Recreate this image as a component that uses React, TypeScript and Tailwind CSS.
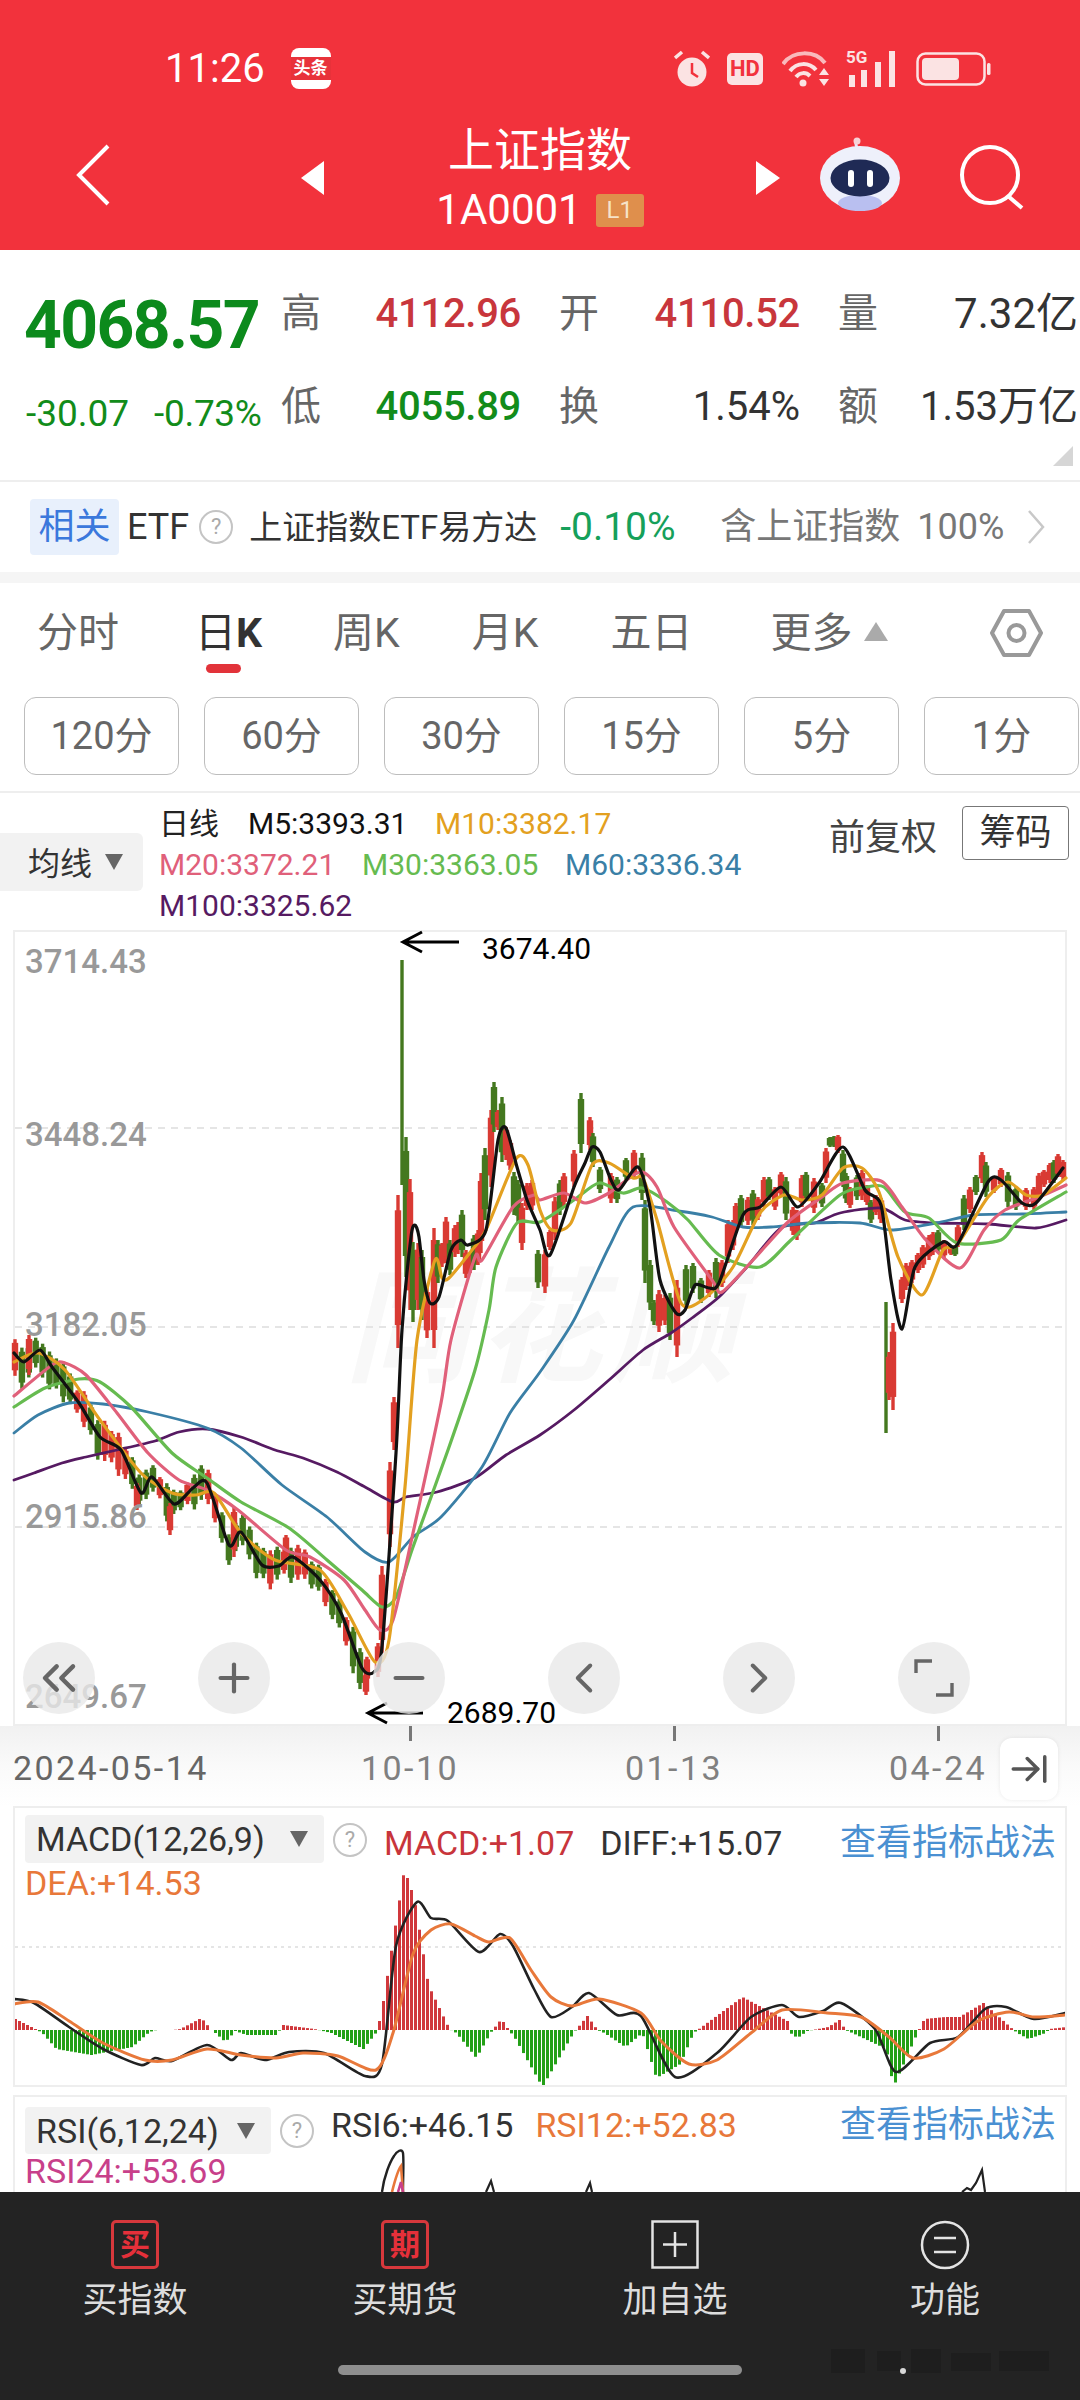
import React from 'react';
import { ArrowRightToLine, ChevronLeft, ChevronRight, ChevronsLeft, Minus, Plus } from 'lucide-react';

type Pt = [number, number];
// x, top, bottom, colour, thin
type Candle = [number, number, number, 'r' | 'g', boolean?];

const parse = (s: string): Pt[] =>
  s
    .trim()
    .split(/\s+/)
    .map((p) => p.split(',').map(Number) as Pt);

const interp = (pts: Pt[], x: number) => {
  for (let i = 1; i < pts.length; i++) {
    if (x <= pts[i][0]) {
      const [x0, y0] = pts[i - 1];
      const [x1, y1] = pts[i];
      return y0 + ((y1 - y0) * (x - x0)) / (x1 - x0 || 1);
    }
  }
  return pts[pts.length - 1][1];
};

// rounds the read-off points into a curve, the chart lines are not angular
const smooth = (s: string) => {
  const pts = parse(s);
  let d = `M${pts[0][0]} ${pts[0][1]}`;
  for (let i = 0; i < pts.length - 1; i++) {
    const p0 = pts[Math.max(i - 1, 0)];
    const p1 = pts[i];
    const p2 = pts[i + 1];
    const p3 = pts[Math.min(i + 2, pts.length - 1)];
    const c1x = p1[0] + (p2[0] - p0[0]) / 8;
    const c1y = p1[1] + (p2[1] - p0[1]) / 8;
    const c2x = p2[0] - (p3[0] - p1[0]) / 8;
    const c2y = p2[1] - (p3[1] - p1[1]) / 8;
    d += `C${c1x} ${c1y} ${c2x} ${c2y} ${p2[0]} ${p2[1]}`;
  }
  return d;
};

// moving averages, page coordinates
const M100 =
  '14,1480 34,1473 62,1463 86,1457 117,1450 155,1441 179,1432 207,1429 241,1437 275,1450 303,1458 337,1472 365,1487 393,1502 406,1497 437,1492 475,1478 506,1455 540,1435 574,1410 609,1380 643,1350 671,1333 692,1318 719,1297 747,1267 781,1228 815,1223 840,1213 881,1208 905,1220 936,1223 988,1224 1036,1228 1066,1220';
const M60 =
  '14,1433 38,1415 69,1403 103,1404 148,1412 207,1428 241,1448 282,1485 327,1517 365,1552 389,1562 413,1537 441,1517 482,1467 510,1413 540,1372 574,1320 609,1247 633,1207 678,1211 712,1217 743,1227 771,1227 809,1223 860,1223 891,1230 936,1223 974,1215 1022,1214 1066,1212';
const M30 =
  '14,1407 45,1388 79,1379 100,1382 131,1407 172,1453 207,1478 241,1502 289,1528 327,1560 362,1590 382,1607 396,1597 413,1547 448,1450 475,1370 489,1310 496,1267 517,1223 540,1222 574,1200 599,1183 623,1193 642,1188 667,1202 688,1220 719,1255 760,1267 791,1240 840,1195 867,1187 884,1187 905,1212 929,1218 957,1243 1001,1240 1019,1220 1066,1192';
const M20 =
  '14,1396 52,1365 65,1363 86,1375 117,1413 148,1453 179,1480 207,1490 238,1510 286,1550 310,1557 344,1580 365,1610 380,1630 393,1620 413,1533 441,1403 451,1340 475,1257 482,1260 513,1207 534,1195 540,1200 564,1193 585,1203 609,1193 640,1172 657,1187 674,1227 712,1280 722,1292 753,1260 788,1222 822,1197 843,1183 881,1181 902,1207 926,1240 960,1268 984,1230 1005,1210 1039,1197 1066,1185';
const M10 =
  '14,1362 38,1353 65,1370 100,1420 141,1473 172,1493 196,1495 214,1493 241,1533 275,1560 320,1570 348,1613 375,1662 389,1640 405,1487 417,1340 435,1260 442,1278 449,1278 472,1250 486,1230 516,1159 528,1165 540,1210 552,1230 571,1223 592,1165 609,1163 633,1178 643,1178 657,1220 681,1303 705,1298 733,1267 760,1213 784,1195 802,1200 822,1195 843,1168 862,1168 879,1192 898,1257 922,1295 943,1250 957,1245 988,1197 1008,1182 1026,1195 1043,1195 1066,1178';
const M5 =
  '14,1353 24,1362 40,1350 52,1367 79,1403 100,1437 121,1450 141,1493 152,1477 174,1504 193,1488 207,1483 229,1545 241,1532 262,1565 279,1566 293,1557 320,1580 341,1613 362,1668 374,1672 382,1647 396,1453 402,1330 411,1237 415,1225 419,1237 424,1280 430,1303 439,1297 451,1250 461,1240 468,1245 486,1230 498,1140 506,1128 517,1167 527,1200 540,1230 550,1255 574,1187 585,1163 592,1147 600,1152 611,1180 619,1190 638,1167 650,1207 660,1280 676,1313 685,1310 695,1285 709,1288 719,1283 743,1215 760,1207 781,1187 798,1207 819,1183 843,1147 865,1190 881,1205 891,1280 902,1329 915,1267 943,1242 957,1245 988,1182 1001,1180 1022,1203 1036,1203 1063,1168';

const DIFF =
  '14,1999 34,2003 69,2027 103,2049 141,2065 155,2058 172,2061 207,2045 231,2060 241,2053 265,2060 289,2052 324,2053 365,2076 382,2064 396,1946 417,1902 431,1918 448,1921 479,1952 500,1934 513,1946 534,1989 551,2017 572,2007 589,1993 617,2015 641,2016 675,2077 717,2053 751,2017 782,2005 799,2017 823,2011 841,2003 875,2029 896,2072 930,2043 958,2037 985,2009 1006,2007 1034,2019 1065,2013';
const DEA =
  '14,2004 38,2002 69,2021 103,2043 145,2060 172,2060 207,2049 241,2055 276,2058 303,2053 338,2056 376,2070 393,2033 413,1954 431,1930 451,1924 475,1936 489,1942 510,1938 531,1970 551,1997 572,2006 599,1999 641,2013 661,2041 689,2064 717,2060 751,2033 782,2010 827,2013 861,2017 889,2037 913,2058 944,2049 978,2021 1009,2012 1034,2017 1065,2015';
// histogram outline as read from the picture: x, y of the bar tip
const HIST = parse(
  '14,2019 34,2029 41,2033 55,2049 90,2055 131,2047 148,2032 155,2030 172,2030 179,2029 200,2018 210,2030 214,2033 224,2042 234,2031 245,2035 275,2035 282,2025 313,2029 330,2033 362,2049 376,2031 382,2001 403,1869 413,1899 427,1985 448,2029 455,2033 475,2058 489,2033 500,2019 508,2031 513,2037 541,2087 572,2033 586,2016 596,2030 603,2033 624,2047 641,2033 655,2078 679,2064 692,2033 699,2028 741,1997 786,2021 789,2033 796,2038 806,2031 827,2027 838,2020 844,2030 851,2033 885,2049 892,2087 916,2033 923,2019 944,2017 958,2017 982,2003 1011,2029 1016,2033 1027,2039 1044,2033 1048,2029 1065,2027',
);

const rand = (i: number) => {
  const v = Math.sin(i * 12.9898) * 43758.5453;
  return v - Math.floor(v);
};

const handCandles: Candle[] = [
  [29, 1335, 1375, 'r'], [137, 1483, 1510, 'r'], [170, 1503, 1535, 'r'], [234, 1507, 1557, 'r'], [286, 1535, 1560, 'r'],
  [366, 1673, 1695, 'r'], [378, 1643, 1677, 'r'], [382, 1566, 1653, 'r'], [390, 1462, 1547, 'r'], [394, 1397, 1450, 'r'],
  [398, 1195, 1348, 'r'], [402, 960, 1185, 'g', true], [406, 1137, 1277, 'g'], [410, 1179, 1310, 'r'], [413, 1242, 1322, 'g'],
  [418, 1243, 1310, 'r'], [422, 1250, 1320, 'g'], [427, 1287, 1338, 'r'], [434, 1228, 1348, 'r'], [438, 1240, 1283, 'g'],
  [442, 1243, 1267, 'r'], [446, 1217, 1263, 'r'], [450, 1240, 1275, 'g'], [455, 1225, 1257, 'r'], [458, 1222, 1254, 'r'],
  [462, 1210, 1257, 'g'], [466, 1250, 1278, 'r'], [470, 1253, 1273, 'r'], [474, 1235, 1270, 'g'], [478, 1230, 1265, 'r'],
  [481, 1173, 1253, 'r'], [485, 1148, 1220, 'g'], [491, 1110, 1187, 'r'], [494, 1082, 1132, 'g'], [498, 1110, 1130, 'r'],
  [502, 1097, 1162, 'g'], [506, 1127, 1160, 'r'], [510, 1140, 1170, 'r'], [514, 1172, 1215, 'g'], [518, 1180, 1222, 'g'],
  [522, 1203, 1250, 'r'], [527, 1183, 1210, 'r'], [532, 1180, 1210, 'r'], [538, 1250, 1288, 'g'], [545, 1250, 1293, 'r'],
  [550, 1230, 1250, 'r'], [555, 1197, 1240, 'r'], [560, 1180, 1215, 'g'], [564, 1173, 1207, 'r'], [574, 1150, 1187, 'r'],
  [581, 1093, 1153, 'g'], [590, 1117, 1150, 'r'], [593, 1133, 1167, 'g'], [600, 1167, 1193, 'g'], [611, 1173, 1203, 'r'],
  [617, 1177, 1203, 'g'], [626, 1158, 1180, 'g'], [634, 1150, 1177, 'r'], [642, 1153, 1200, 'g'], [645, 1200, 1283, 'g'],
  [650, 1260, 1310, 'g'], [654, 1300, 1325, 'g'], [659, 1290, 1332, 'r'], [665, 1295, 1325, 'r'], [670, 1293, 1340, 'g'],
  [677, 1280, 1357, 'r'], [686, 1265, 1307, 'g'], [693, 1263, 1293, 'g'], [701, 1278, 1303, 'g'], [709, 1270, 1297, 'r'],
  [716, 1258, 1298, 'g'], [722, 1260, 1287, 'r'], [728, 1220, 1263, 'r'], [733, 1220, 1250, 'r'], [736, 1203, 1233, 'r'],
  [741, 1195, 1227, 'g'], [748, 1197, 1225, 'r'], [753, 1190, 1225, 'g'], [758, 1197, 1220, 'r'], [764, 1177, 1207, 'r'],
  [769, 1177, 1200, 'g'], [775, 1187, 1210, 'r'], [781, 1172, 1197, 'r'], [786, 1177, 1220, 'g'], [793, 1207, 1235, 'r'],
  [797, 1210, 1240, 'r'], [802, 1175, 1207, 'r'], [806, 1172, 1200, 'g'], [814, 1178, 1213, 'r'], [822, 1183, 1207, 'g'],
  [826, 1148, 1183, 'r'], [830, 1137, 1147, 'g'], [834, 1136, 1147, 'g'], [838, 1135, 1153, 'r'], [843, 1150, 1187, 'g'],
  [846, 1173, 1203, 'g'], [850, 1187, 1208, 'r'], [857, 1175, 1200, 'g'], [862, 1170, 1200, 'r'], [867, 1185, 1205, 'r'],
  [871, 1200, 1223, 'g'], [876, 1195, 1215, 'r'], [881, 1198, 1223, 'r'], [886, 1302, 1433, 'g', true], [893, 1323, 1410, 'r'],
  [889, 1352, 1400, 'r'], [902, 1277, 1303, 'r'], [906, 1263, 1290, 'r'], [912, 1260, 1283, 'r'], [918, 1253, 1273, 'r'],
  [923, 1245, 1268, 'r'], [929, 1235, 1260, 'r'], [933, 1232, 1255, 'r'], [938, 1230, 1253, 'g'], [944, 1240, 1258, 'r'],
  [951, 1245, 1255, 'r'], [955, 1245, 1256, 'g'], [958, 1225, 1247, 'r'], [964, 1195, 1230, 'g'], [970, 1187, 1213, 'r'],
  [976, 1175, 1195, 'g'], [982, 1152, 1183, 'r'], [986, 1162, 1197, 'g'], [994, 1177, 1193, 'r'], [1001, 1168, 1187, 'r'],
  [1008, 1172, 1207, 'g'], [1016, 1187, 1210, 'g'], [1026, 1188, 1210, 'r'], [1034, 1187, 1210, 'r'], [1039, 1173, 1200, 'r'],
  [1044, 1170, 1187, 'r'], [1050, 1163, 1183, 'r'], [1054, 1160, 1183, 'g'], [1058, 1154, 1177, 'r'], [1063, 1160, 1180, 'r'],
];

const m5Pts = parse(M5);
const generated: Candle[] = Array.from({ length: 52 }, (_, i) => {
  const x = 15 + i * 6.9;
  const y = interp(m5Pts, x);
  const h = rand(i + 3);
  return [x, y - 8 - h * 12, y + 10 + rand(i + 40) * 20, rand(i + 80) > 0.68 ? 'r' : 'g'] as Candle;
});
const candles = [...generated, ...handCandles];

const CandleMark = ({ c }: { c: Candle }) => {
  const [x, top, bottom, colour, thin] = c;
  const fill = colour === 'r' ? '#d93a33' : '#44781f';
  const h = bottom - top;
  return (
    <g fill={fill}>
      <rect x={x - 1.7} y={top} width={3.4} height={h} />
      {!thin && <rect x={x - 3.2} y={top + h * 0.1} width={6.4} height={h * 0.75} />}
    </g>
  );
};

const Line = ({ d, color, w = 3.2 }: { d: string; color: string; w?: number }) => (
  <path d={smooth(d)} fill="none" stroke={color} strokeWidth={w} strokeLinejoin="round" strokeLinecap="round" />
);

const Question = () => (
  <span className="flex h-[34px] w-[34px] shrink-0 items-center justify-center rounded-full border-2 border-[#c4c4c4] text-[22px] leading-none text-[#aaaaaa]">
    ?
  </span>
);

const DownTriangle = ({ className }: { className: string }) => (
  <svg viewBox="0 0 20 18" className={className}>
    <path d="M1 1h18l-9 16z" fill="#666666" />
  </svg>
);

const StatusBar = () => (
  <div className="mt-[48px] flex h-[41px] items-center justify-between pl-[165px] pr-[89px]">
    <div className="flex items-center gap-[26px]">
      <span className="text-[40px] leading-none text-white">11:26</span>
      <div className="flex h-[41px] w-[40px] items-center justify-center rounded-[8px] bg-white">
        <span className="flex h-[23px] w-full items-center justify-center bg-[#e8323a] text-[17px] font-bold leading-none text-white">
          头条
        </span>
      </div>
    </div>
    <div className="flex items-center text-[#fbe3e3]">
      <svg viewBox="0 0 36 38" className="h-[38px] w-[36px]">
        <circle cx="18" cy="22" r="14.5" fill="#fbe3e3" />
        <path d="M18 13v10l6 4" fill="none" stroke="#f2323c" strokeWidth="2.5" />
        <path d="M1 8l7-6M35 8l-7-6" stroke="#fbe3e3" strokeWidth="3.5" />
      </svg>
      <span className="ml-[17px] flex h-[32px] w-[36px] items-center justify-center rounded-[5px] bg-[#fbe3e3] text-[22px] font-bold leading-none text-[#f2323c]">
        HD
      </span>
      <svg viewBox="0 0 48 36" className="ml-[19px] h-[36px] w-[48px]">
        <path d="M1 13C11 -1 33 -1 43 12" fill="none" stroke="#f9b9bc" strokeWidth="4" />
        <path d="M8 20c7-9 19-9 26-1" fill="none" stroke="#fbe3e3" strokeWidth="4" />
        <path d="M14 26c4-5 10-5 14-1" fill="none" stroke="#fbe3e3" strokeWidth="4" />
        <circle cx="21" cy="32" r="3.5" fill="#fbe3e3" />
        <path d="M42 17l5 7h-10zM42 35l5-7h-10z" fill="#fbe3e3" />
      </svg>
      <div className="relative ml-[16px] h-[36px] w-[53px]">
        <span className="absolute left-0 top-[-2px] text-[17px] font-bold leading-none">5G</span>
        <svg viewBox="0 0 53 36" className="h-[36px] w-[53px]">
          <rect x="3" y="24" width="6" height="12" fill="#fbe3e3" />
          <rect x="15" y="19" width="6" height="17" fill="#fbe3e3" />
          <rect x="29" y="11" width="6" height="25" fill="#fbe3e3" />
          <rect x="43" y="0" width="6" height="36" fill="#fbe3e3" />
        </svg>
      </div>
      <svg viewBox="0 0 75 34" className="ml-[17px] h-[34px] w-[75px]">
        <rect x="1.5" y="1.5" width="67" height="31" rx="8" fill="none" stroke="#fbe3e3" strokeWidth="2.5" />
        <rect x="6" y="6" width="37" height="22" rx="4" fill="#fbe3e3" />
        <rect x="71" y="11" width="3.5" height="12" rx="1.5" fill="#fbe3e3" />
      </svg>
    </div>
  </div>
);

const NavBar = () => (
  <div className="mt-[39px] flex h-[110px] items-start pl-[76px] text-white">
    <svg viewBox="0 0 34 62" className="mt-[16px] h-[62px] w-[34px] shrink-0">
      <path d="M32 2L3 31l29 29" fill="none" stroke="#ffffff" strokeWidth="4" />
    </svg>
    <svg viewBox="0 0 23 34" className="ml-[191px] mt-[33px] h-[34px] w-[23px] shrink-0">
      <path d="M23 0v34L0 17z" fill="#ffffff" />
    </svg>
    <div className="flex w-[432px] shrink-0 flex-col items-center">
      <span className="text-[46px] leading-[44px]">上证指数</span>
      <div className="mt-[20px] flex items-center gap-[14px]">
        <span className="text-[42px] leading-[36px]">1A0001</span>
        <span className="flex h-[33px] w-[48px] items-center justify-center rounded-[3px] bg-[#df8f4c] text-[24px] leading-none text-[#f6e3c9]">
          L1
        </span>
      </div>
    </div>
    <svg viewBox="0 0 24 34" className="mt-[33px] h-[34px] w-[24px] shrink-0">
      <path d="M0 0v34l24-17z" fill="#ffffff" />
    </svg>
    <svg viewBox="0 0 80 74" className="ml-[40px] mt-[9px] h-[74px] w-[80px] shrink-0">
      <path d="M38 12c-3-4-3-8 1-9" fill="none" stroke="#e8e9fb" strokeWidth="3" />
      <circle cx="37" cy="4" r="3.5" fill="#f7d2d6" />
      <ellipse cx="40" cy="41" rx="40" ry="32" fill="#eef0fb" />
      <ellipse cx="40" cy="66" rx="22" ry="8" fill="#b9bff0" />
      <ellipse cx="40" cy="41" rx="29.5" ry="18.5" fill="#1f2a55" />
      <rect x="28" y="33" width="6" height="17" rx="3" fill="#ffffff" />
      <rect x="47" y="33" width="6" height="17" rx="3" fill="#ffffff" />
    </svg>
    <svg viewBox="0 0 67 66" className="ml-[58px] mt-[16px] h-[66px] w-[67px] shrink-0">
      <circle cx="32" cy="31" r="28" fill="none" stroke="#ffffff" strokeWidth="4" />
      <path d="M50 52l14 12" fill="none" stroke="#ffffff" strokeWidth="4" />
    </svg>
  </div>
);

const Quote = () => (
  <div className="relative flex h-[232px] border-b-2 border-[#eeeeee]">
    <div className="w-[281px] shrink-0 pl-[24px]">
      <div className="mt-[34px] h-[84px] text-[66px] font-bold leading-[84px] tracking-[-1.6px] text-[#0c8a1c]">4068.57</div>
      <div className="mt-[28px] flex text-[37px] leading-[36px] text-[#128c1a]">
        <span className="w-[130px] pl-[2px]">-30.07</span>
        <span className="tracking-[-0.3px]">-0.73%</span>
      </div>
    </div>
    <div className="mt-[40px] grid h-[186px] grid-cols-[41px_161px_41px_162px_42px_160px] grid-rows-[48px_48px] gap-x-[38px] gap-y-[45px] text-[40px] leading-[48px]">
      <span className="text-[#666666]">高</span>
      <span className="text-right font-medium tracking-[-0.3px] text-[#c8363c]">4112.96</span>
      <span className="text-[#666666]">开</span>
      <span className="text-right font-medium tracking-[-0.3px] text-[#c8363c]">4110.52</span>
      <span className="text-[#666666]">量</span>
      <span className="whitespace-nowrap text-right text-[42px] text-[#333333]">7.32亿</span>
      <span className="text-[#666666]">低</span>
      <span className="text-right font-medium tracking-[-0.3px] text-[#128c1a]">4055.89</span>
      <span className="text-[#666666]">换</span>
      <span className="text-right text-[#333333]">1.54%</span>
      <span className="text-[#666666]">额</span>
      <span className="whitespace-nowrap text-right text-[40px] text-[#333333]">1.53万亿</span>
    </div>
    <svg viewBox="0 0 20 20" className="absolute left-[1053px] top-[196px] h-[20px] w-[20px]">
      <path d="M20 0v20H0z" fill="#d6d6d6" />
    </svg>
  </div>
);

const EtfRow = () => (
  <div className="flex h-[90px] items-center whitespace-nowrap pl-[30px] text-[36px] leading-none">
    <span className="flex h-[56px] w-[89px] shrink-0 items-center justify-center rounded-[4px] bg-[#e8f0fc] text-[#3b78dc]">相关</span>
    <span className="ml-[8px] text-[#333333]">ETF</span>
    <span className="ml-[10px]">
      <Question />
    </span>
    <span className="ml-[16px] w-[292px] shrink-0 text-[33px] text-[#333333]">上证指数ETF易方达</span>
    <span className="ml-[19px] w-[123px] shrink-0 text-[39px] text-[#16a05a]">-0.10%</span>
    <span className="ml-[37px] w-[180px] shrink-0 text-[#777777]">含上证指数</span>
    <span className="ml-[17px] w-[90px] shrink-0 text-[36px] text-[#777777]">100%</span>
    <svg viewBox="0 0 18 34" className="ml-[20px] h-[34px] w-[18px] shrink-0">
      <path d="M2 1l14 16L2 33" fill="none" stroke="#c8c8c8" strokeWidth="2.5" />
    </svg>
  </div>
);

const Tabs = () => (
  <div className="flex h-[114px] items-center pb-[14px] pl-[37px] text-[41px] leading-none text-[#666666]">
    <span>分时</span>
    <span className="relative ml-[76px] text-[#333333]">
      日<b className="font-bold">K</b>
      <span className="absolute left-[11px] top-[51px] h-[9px] w-[35px] rounded-full bg-[#e2333a]" />
    </span>
    <span className="ml-[71px]">周K</span>
    <span className="ml-[72px]">月K</span>
    <span className="ml-[72px]">五日</span>
    <span className="ml-[78px]">更多</span>
    <svg viewBox="0 0 24 19" className="mb-[4px] ml-[11px] h-[19px] w-[24px]">
      <path d="M12 0l12 19H0z" fill="#aaaaaa" />
    </svg>
    <svg viewBox="0 0 53 50" className="ml-[102px] h-[50px] w-[53px]">
      <path d="M14 3h25l12 22-12 22H14L2 25z" fill="none" stroke="#999999" strokeWidth="4" strokeLinejoin="round" />
      <circle cx="26.5" cy="25" r="8" fill="none" stroke="#999999" strokeWidth="4" />
    </svg>
  </div>
);

const Periods = () => (
  <div className="flex h-[96px] gap-[25px] border-b-2 border-[#eeeeee] pl-[24px]">
    {['120分', '60分', '30分', '15分', '5分', '1分'].map((p) => (
      <span
        key={p}
        className="flex h-[78px] w-[155px] shrink-0 items-center justify-center rounded-[12px] border border-[#bdbdbd] text-[38px] leading-none text-[#666666]"
      >
        {p}
      </span>
    ))}
  </div>
);

const Legend = () => (
  <div className="flex h-[137px] text-[30px] leading-[41px]">
    <div className="mt-[40px] flex h-[58px] w-[143px] shrink-0 items-center rounded-r-[6px] bg-[#f2f2f2] pl-[28px]">
      <span className="pt-[4px] text-[32px] leading-none text-[#333333]">均线</span>
      <DownTriangle className="ml-[12px] h-[18px] w-[20px]" />
    </div>
    <div className="ml-[16px] mt-[10px] w-[600px]">
      <div className="flex">
        <span className="w-[89px] text-[#222222]">日线</span>
        <span className="w-[187px] text-[#111111]">M5:3393.31</span>
        <span className="text-[#e3a020]">M10:3382.17</span>
      </div>
      <div className="flex">
        <span className="w-[203px] text-[#e0607a]">M20:3372.21</span>
        <span className="w-[203px] text-[#66bb50]">M30:3363.05</span>
        <span className="text-[#3a7fa6]">M60:3336.34</span>
      </div>
      <div className="text-[#561a62]">M100:3325.62</div>
    </div>
    <span className="ml-[70px] mt-[23px] text-[36px] leading-[44px] text-[#444444]">前复权</span>
    <span className="ml-[25px] mt-[13px] flex h-[54px] w-[107px] items-center justify-center rounded-[4px] border border-[#777777] text-[36px] leading-none text-[#333333]">
      筹码
    </span>
  </div>
);

const KChart = () => (
  <div className="relative ml-[13px] h-[796px] w-[1054px] border-2 border-[#eeeeee]">
    <svg viewBox="15 932 1050 792" className="absolute inset-0 h-[792px] w-[1050px] overflow-visible">
      <text x="345" y="1372" fontSize="124" fontWeight="700" fontStyle="italic" fill="#f8f8f8" textLength="390">
        同花顺
      </text>
      {[1128, 1327, 1527].map((y) => (
        <line key={y} x1="15" x2="1065" y1={y} y2={y} stroke="#dddddd" strokeWidth="1.5" strokeDasharray="7 6" />
      ))}
      {candles.map((c, i) => (
        <CandleMark key={i} c={c} />
      ))}
      <Line d={M100} color="#561a62" w={2.8} />
      <Line d={M60} color="#3a7fa6" w={2.8} />
      <Line d={M30} color="#66bb50" />
      <Line d={M20} color="#e0607a" />
      <Line d={M10} color="#e3a020" />
      <Line d={M5} color="#111111" />
      <path d="M459 942H403m19-10l-19 10 19 10" fill="none" stroke="#000000" strokeWidth="3" />
      <path d="M423 1713H368m19-10l-19 10 19 10" fill="none" stroke="#000000" strokeWidth="3" />
    </svg>
    {[
      ['3714.43', 'top-[10px]'],
      ['3448.24', 'top-[183px]'],
      ['3182.05', 'top-[373px]'],
      ['2915.86', 'top-[565px]'],
      ['2649.67', 'top-[745px]'],
    ].map(([t, top]) => (
      <span key={t} className={`absolute left-[10px] ${top} text-[33px] font-medium leading-[40px] text-[#999999]`}>
        {t}
      </span>
    ))}
    <span className="absolute left-[467px] top-[-3px] text-[30px] leading-[40px] text-black">3674.40</span>
    <span className="absolute left-[432px] top-[761px] text-[30px] leading-[40px] text-black">2689.70</span>
    <div className="absolute left-[8px] top-[710px] flex gap-[103px]">
      {[
        <ChevronsLeft key="a" size={56} strokeWidth={1.9} />,
        <Plus key="b" size={46} strokeWidth={2.2} />,
        <Minus key="c" size={46} strokeWidth={2.2} />,
        <ChevronLeft key="d" size={50} strokeWidth={1.9} />,
        <ChevronRight key="e" size={50} strokeWidth={1.9} />,
        <svg key="f" viewBox="0 0 40 38" className="h-[38px] w-[40px]" fill="none" stroke="#666666" strokeWidth="3.4">
          <path d="M2 14V2h16M38 24v12H22" />
        </svg>,
      ].map((icon, i) => (
        <div key={i} className="flex h-[72px] w-[72px] items-center justify-center rounded-full bg-[#e8e8e8]/80 text-[#666666]">
          {icon}
        </div>
      ))}
    </div>
  </div>
);

const DateAxis = () => (
  <div className="relative flex h-[80px] bg-gradient-to-b from-[#f1f1f1] via-[#fafafa] to-white pl-[13px] text-[34px] leading-[40px] tracking-[2.4px] text-[#666666]">
    <span className="mt-[22px] w-[337px]">2024-05-14</span>
    {['10-10', '01-13', '04-24'].map((d, i) => (
      <div key={d} className={`flex w-[120px] flex-col items-center text-[#808080] ${i === 0 ? '' : 'ml-[144px]'}`}>
        <span className="h-[15px] w-[3px] bg-[#777777]" />
        <span className="mt-[7px]">{d}</span>
      </div>
    ))}
    <div className="absolute left-[1000px] top-[12px] flex h-[62px] w-[58px] items-center justify-center rounded-[12px] bg-white shadow-[0_0_4px_rgba(0,0,0,0.08)]">
      <ArrowRightToLine size={42} strokeWidth={2} color="#555555" />
    </div>
  </div>
);

const MacdPanel = () => {
  const bars: { x: number; y: number }[] = [];
  for (let x = 14; x < 1066; x += 4) bars.push({ x, y: interp(HIST, x) });
  return (
    <div className="relative ml-[13px] h-[281px] w-[1054px] border-2 border-[#eeeeee]">
      <svg viewBox="15 1808 1050 277" className="absolute inset-0 h-[277px] w-[1050px]">
        <line x1="15" x2="1065" y1="1947" y2="1947" stroke="#dddddd" strokeWidth="1.5" strokeDasharray="3 4" />
        {bars.map((b) => (
          <rect
            key={b.x}
            x={b.x}
            y={Math.min(b.y, 2030)}
            width={3}
            height={Math.abs(2030 - b.y)}
            fill={b.y < 2030 ? '#d0383c' : '#23a017'}
          />
        ))}
        <Line d={DIFF} color="#222222" w={2.6} />
        <Line d={DEA} color="#e8783a" w={3} />
      </svg>
      <div className="relative flex items-start pl-[10px] pr-[9px] pt-[7px] text-[34px] leading-[52px]">
        <div className="flex h-[48px] w-[299px] shrink-0 items-center rounded-[4px] bg-[#f2f2f2] pl-[11px]">
          <span className="w-[253px] text-[#333333]">MACD(12,26,9)</span>
          <DownTriangle className="h-[18px] w-[20px]" />
        </div>
        <span className="ml-[9px] mt-[8px]">
          <Question />
        </span>
        <span className="ml-[17px] mt-[2px] text-[#c8353b]">MACD:+1.07</span>
        <span className="ml-[26px] mt-[2px] text-[#333333]">DIFF:+15.07</span>
        <span className="ml-auto mt-[2px] text-[36px] text-[#4a90d2]">查看指标战法</span>
      </div>
      <div className="relative mt-[-4px] pl-[10px] text-[34px] leading-[36px] text-[#e8783a]">DEA:+14.53</div>
    </div>
  );
};

const RsiPanel = () => (
  <div className="relative ml-[13px] mt-[8px] h-[97px] w-[1054px] overflow-hidden border-x-2 border-t-2 border-[#eeeeee]">
    <svg viewBox="15 2097 1050 95" className="absolute inset-0 h-[95px] w-[1050px]">
      <path d="M382 2192c2-16 8-30 12-36 3-5 8-8 9-3 1 8 0 22 0 39" fill="none" stroke="#222222" strokeWidth="2.4" />
      <path d="M392 2192c3-12 6-22 9-26l2 26" fill="none" stroke="#e8783a" strokeWidth="2.6" />
      <path d="M398 2192l3-10 2 10" fill="none" stroke="#c8408a" strokeWidth="2.6" />
      <path d="M486 2192l5-11 3 11M586 2192l4-9 2 9M962 2192l5-4 4 2 5-7 6-13 3 22" fill="none" stroke="#222222" strokeWidth="2.2" />
    </svg>
    <div className="relative flex items-start pl-[10px] pr-[9px] pt-[8px] text-[34px] leading-[40px]">
      <div className="mt-[2px] flex h-[47px] w-[246px] shrink-0 items-center rounded-[4px] bg-[#f2f2f2] pl-[11px]">
        <span className="w-[200px] text-[#333333]">RSI(6,12,24)</span>
        <DownTriangle className="h-[18px] w-[20px]" />
      </div>
      <span className="ml-[9px] mt-[9px]">
        <Question />
      </span>
      <span className="ml-[17px] text-[#333333]">RSI6:+46.15</span>
      <span className="ml-[22px] text-[#e8783a]">RSI12:+52.83</span>
      <span className="ml-auto text-[36px] text-[#4a90d2]">查看指标战法</span>
    </div>
    <div className="relative mt-[2px] pl-[10px] text-[34px] leading-[30px] text-[#c8408a]">RSI24:+53.69</div>
  </div>
);

const BottomItem = ({ label, children }: { label: string; children: React.ReactNode }) => (
  <div className="flex w-[270px] flex-col items-center">
    <div className="flex h-[49px] items-center justify-center">{children}</div>
    <span className="mt-[11px] text-[35px] leading-[42px] text-[#dddddd]">{label}</span>
  </div>
);

const RedBox = ({ char }: { char: string }) => (
  <span className="flex h-[49px] w-[48px] items-center justify-center rounded-[5px] border-[3px] border-[#d7383c] text-[30px] font-bold leading-none text-[#e5303a]">
    {char}
  </span>
);

const BottomBar = () => (
  <div className="relative flex h-[208px] flex-col bg-[#232323] pt-[28px]">
    <div className="flex">
      <BottomItem label="买指数">
        <RedBox char="买" />
      </BottomItem>
      <BottomItem label="买期货">
        <RedBox char="期" />
      </BottomItem>
      <BottomItem label="加自选">
        <svg viewBox="0 0 48 49" className="h-[49px] w-[48px]" fill="none" stroke="#e4e4e4" strokeWidth="2.5">
          <rect x="1.5" y="1.5" width="45" height="46" />
          <path d="M24 12v25M12 24.5h24" />
        </svg>
      </BottomItem>
      <BottomItem label="功能">
        <svg viewBox="0 0 50 50" className="h-[50px] w-[50px]" fill="none" stroke="#e4e4e4" strokeWidth="2.5">
          <circle cx="25" cy="25" r="23" />
          <path d="M14 18h22M14 32h22" />
        </svg>
      </BottomItem>
    </div>
    <div className="absolute left-[338px] top-[173px] h-[10px] w-[404px] rounded-full bg-[#8e8e8e]" />
    <svg viewBox="0 0 227 31" className="absolute left-[827px] top-[153px] h-[31px] w-[227px]">
      <g fill="#1e1e1e">
        <rect x="4" y="4" width="34" height="24" />
        <rect x="50" y="6" width="24" height="20" />
        <rect x="84" y="4" width="30" height="24" />
        <rect x="124" y="8" width="40" height="18" />
        <rect x="172" y="6" width="50" height="20" />
      </g>
      <circle cx="76" cy="26" r="3" fill="#d8d8d8" />
    </svg>
  </div>
);

export default function App() {
  return (
    <div className="h-[2400px] w-[1080px] overflow-hidden bg-white font-[Roboto,'Noto_Sans_CJK_SC',sans-serif]">
      <header className="h-[250px] overflow-hidden bg-[#f2323c]">
        <StatusBar />
        <NavBar />
      </header>
      <Quote />
      <EtfRow />
      <div className="h-[11px] bg-[#f5f5f5]" />
      <Tabs />
      <Periods />
      <Legend />
      <KChart />
      <DateAxis />
      <MacdPanel />
      <RsiPanel />
      <BottomBar />
    </div>
  );
}
